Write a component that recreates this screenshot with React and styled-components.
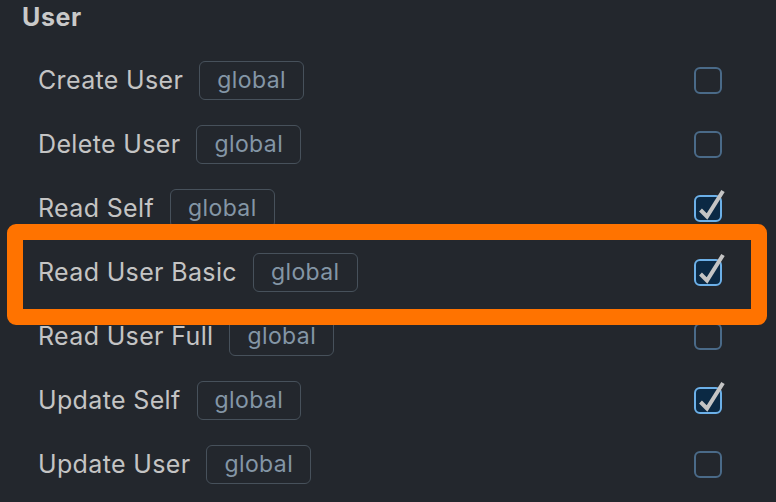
import React from 'react'
import styled, {createGlobalStyle} from 'styled-components'

const GlobalStyle = createGlobalStyle`
  html, body {
    margin: 0;
    padding: 0;
    background: #23272d;
  }
  body {
    font-family: 'Inter', 'Liberation Sans', sans-serif;
  }
`

const Panel = styled.section`
  position: relative;
  width: 776px;
  height: 502px;
  overflow: hidden;
  background: #23272d;
  color: #c6c6c6;
`

const Heading = styled.h3`
  margin: 0;
  height: 48px;
  padding: 0 0 14px 22px;
  display: flex;
  align-items: center;
  box-sizing: border-box;
  font: 700 25px/1 'Inter', sans-serif;
  letter-spacing: 0.6px;
  color: #c9c9c9;
`

const List = styled.ul`
  margin: 0;
  padding: 0;
  list-style: none;
`

const Row = styled.li`
  display: flex;
  align-items: center;
  height: 64px;
  padding: 0 54px 0 38px;
`

const Label = styled.span`
  font: 400 25px/1 'Inter', sans-serif;
  letter-spacing: 0.35px;
  color: #c4c4c4;
`

const Badge = styled.span`
  margin-left: 16px;
  display: inline-flex;
  align-items: center;
  height: 39px;
  padding: 1px 17px 0;
  box-sizing: border-box;
  border: 1.5px solid #47515b;
  border-radius: 6px;
  font: 400 23px/1 'Inter', sans-serif;
  letter-spacing: 0.4px;
  color: #8496a6;
`

const Check = styled.span`
  position: relative;
  margin-left: auto;
  width: 28px;
  height: 27px;
  box-sizing: border-box;
  border-radius: 6px;
  border: 2px solid ${p => (p.$on ? '#6cb0e8' : '#4a6a88')};
  background: ${p => (p.$on ? '#0b2944' : 'transparent')};
`

const Tick = styled.svg`
  position: absolute;
  left: -2px;
  top: -2px;
  overflow: visible;
`

const Highlight = styled.div`
  position: absolute;
  left: 7px;
  top: 224px;
  width: 760px;
  height: 101px;
  box-sizing: border-box;
  border: 16px solid #ff7300;
  border-radius: 9px;
  pointer-events: none;
`

const rows = [
  {name: 'Create User', on: false},
  {name: 'Delete User', on: false},
  {name: 'Read Self', on: true},
  {name: 'Read User Basic', on: true},
  {name: 'Read User Full', on: false},
  {name: 'Update Self', on: true},
  {name: 'Update User', on: false},
]

export default function App() {
  return (
    <Panel>
      <GlobalStyle />
      <Heading>User</Heading>
      <List>
        {rows.map(({name, on}) => (
          <Row key={name}>
            <Label>{name}</Label>
            <Badge>global</Badge>
            <Check $on={on}>
              {on && (
                <Tick width="28" height="27" viewBox="0 0 28 27">
                  <path
                    d="M6.5 15 L13 21.5 L29 -4"
                    fill="none"
                    stroke="#c4c4c4"
                    strokeWidth="4"
                    strokeLinecap="butt"
                    strokeLinejoin="miter"
                  />
                </Tick>
              )}
            </Check>
          </Row>
        ))}
      </List>
      <Highlight />
    </Panel>
  )
}
